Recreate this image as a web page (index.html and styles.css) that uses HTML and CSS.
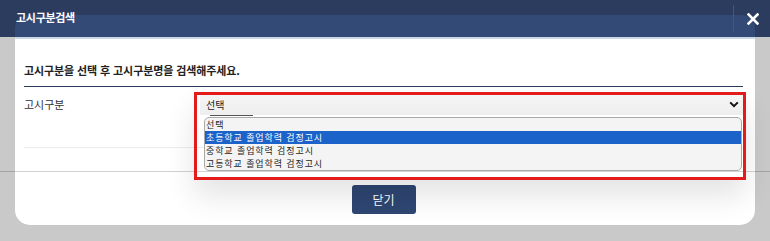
FILE: index.html
```html
<!DOCTYPE html>
<html lang="ko">
<head>
    <meta charset="UTF-8">
    <meta name="viewport" content="width=device-width, initial-scale=1.0">
    <title>고시구분검색</title>
    <link rel="stylesheet" href="styles.css">
</head>
<body>
    <div class="screen">
        <div class="topbar">
            <h2 class="modal-title">고시구분검색</h2>
            <button class="close-btn" type="button" aria-label="닫기">
                <svg width="12" height="12" viewBox="0 0 12 12">
                    <path d="M1.5 1.5 L10.5 10.5 M10.5 1.5 L1.5 10.5" stroke="#fff" stroke-width="2.6" stroke-linecap="square"/>
                </svg>
            </button>
        </div>

        <div class="modal">
            <p class="guide">고시구분을 선택 후 고시구분명을 검색해주세요.</p>

            <table class="form-table">
                <tr>
                    <th>고시구분</th>
                    <td>
                        <div class="select-wrap">
                            <div class="select">
                                <span>선택</span>
                                <svg width="10" height="7" viewBox="0 0 10 7">
                                    <path d="M1.2 1.4 L5 5.2 L8.8 1.4" fill="none" stroke="#111" stroke-width="2"/>
                                </svg>
                            </div>
                            <div class="focus-mark"></div>
                            <ul class="options">
                                <li>선택</li>
                                <li class="active">초등학교 졸업학력 검정고시</li>
                                <li>중학교 졸업학력 검정고시</li>
                                <li>고등학교 졸업학력 검정고시</li>
                            </ul>
                            <div class="highlight"></div>
                        </div>
                    </td>
                </tr>
            </table>

            <div class="actions">
                <button class="btn-close" type="button">닫기</button>
            </div>
        </div>

        <div class="page-rule"></div>
    </div>
</body>
</html>
```

FILE: styles.css
```css
* {
    box-sizing: border-box;
}
body {
    margin: 0;
    font-family: "Noto Sans CJK KR", "Noto Sans", sans-serif;
    background: #c9c9c9;
}
.screen {
    position: relative;
    width: 770px;
    height: 241px;
    overflow: hidden;
    background: #c9c9c9;
}
.topbar {
    position: relative;
    height: 37px;
    background: #2b3c5f;
    display: flex;
    align-items: flex-start;
    justify-content: space-between;
}
.topbar::before {
    content: "";
    position: absolute;
    left: 15px;
    top: 15px;
    width: 740px;
    height: 22px;
    background: #344a76;
    border-radius: 14px 14px 0 0;
}
.modal-title {
    position: relative;
    margin: 9px 0 0 16px;
    font-size: 11px;
    line-height: 16px;
    font-weight: 700;
    color: #fff;
    letter-spacing: -0.3px;
}
.close-btn {
    position: relative;
    width: 37px;
    height: 27px;
    margin-top: 5px;
    padding: 0 0 0 13px;
    border: none;
    border-left: 1px solid #43567c;
    background: transparent;
    display: flex;
    align-items: center;
}
.modal {
    margin: 0 15px;
    height: 188px;
    padding: 0 12px 0 9px;
    background: #fff;
    border-top: 2px solid #cdd8e7;
    border-radius: 0 0 15px 15px;
}
.guide {
    margin: 0;
    padding: 22px 0 7px;
    font-size: 11px;
    line-height: 18px;
    font-weight: 700;
    color: #222;
    letter-spacing: -0.1px;
    border-bottom: 1px solid #2b3c5f;
}
.form-table {
    width: 100%;
    border-collapse: collapse;
}
.form-table th {
    width: 176px;
    height: 60px;
    padding: 8px 0 0;
    vertical-align: top;
    text-align: left;
    font-size: 11px;
    line-height: 18px;
    font-weight: 400;
    color: #333;
    border-bottom: 1px solid #ececec;
}
.form-table td {
    padding: 6px 0 0;
    vertical-align: top;
    border-bottom: 1px solid #ececec;
}
.select-wrap {
    position: relative;
    z-index: 2;
}
.select {
    height: 22px;
    padding: 0 4px 0 6px;
    background: linear-gradient(#f6f6f6, #eeeeee);
    display: flex;
    align-items: center;
    justify-content: space-between;
    font-size: 10px;
    color: #222;
}
.focus-mark {
    position: absolute;
    left: 10px;
    top: 22px;
    width: 43px;
    height: 1px;
    background: #555;
}
.options {
    position: absolute;
    left: 4px;
    top: 24px;
    width: 538px;
    margin: 0;
    padding: 0;
    list-style: none;
    background: #f4f4f4;
    border: 1px solid #a9a9a9;
    border-radius: 5px;
    overflow: hidden;
}
.options li {
    height: 13px;
    padding-left: 1px;
    font-size: 9px;
    line-height: 13px;
    letter-spacing: 0.9px;
    color: #222;
}
.options li.active {
    background: #1c63c9;
    color: #fff;
}
.highlight {
    position: absolute;
    left: -6px;
    top: -1px;
    width: 552px;
    height: 88px;
    border: 3px solid #e31b1b;
    box-shadow: 0 16px 30px rgba(0, 0, 0, 0.11);
    pointer-events: none;
}
.actions {
    display: flex;
    justify-content: center;
    margin-top: 37px;
}
.btn-close {
    width: 64px;
    height: 29px;
    border: none;
    border-radius: 3px;
    background: #2e4672;
    color: #fff;
    font-family: inherit;
    font-size: 12px;
}
.page-rule {
    position: absolute;
    left: 0;
    top: 171px;
    width: 770px;
    height: 1px;
    background: rgba(0, 0, 0, 0.18);
    z-index: 1;
}
```
